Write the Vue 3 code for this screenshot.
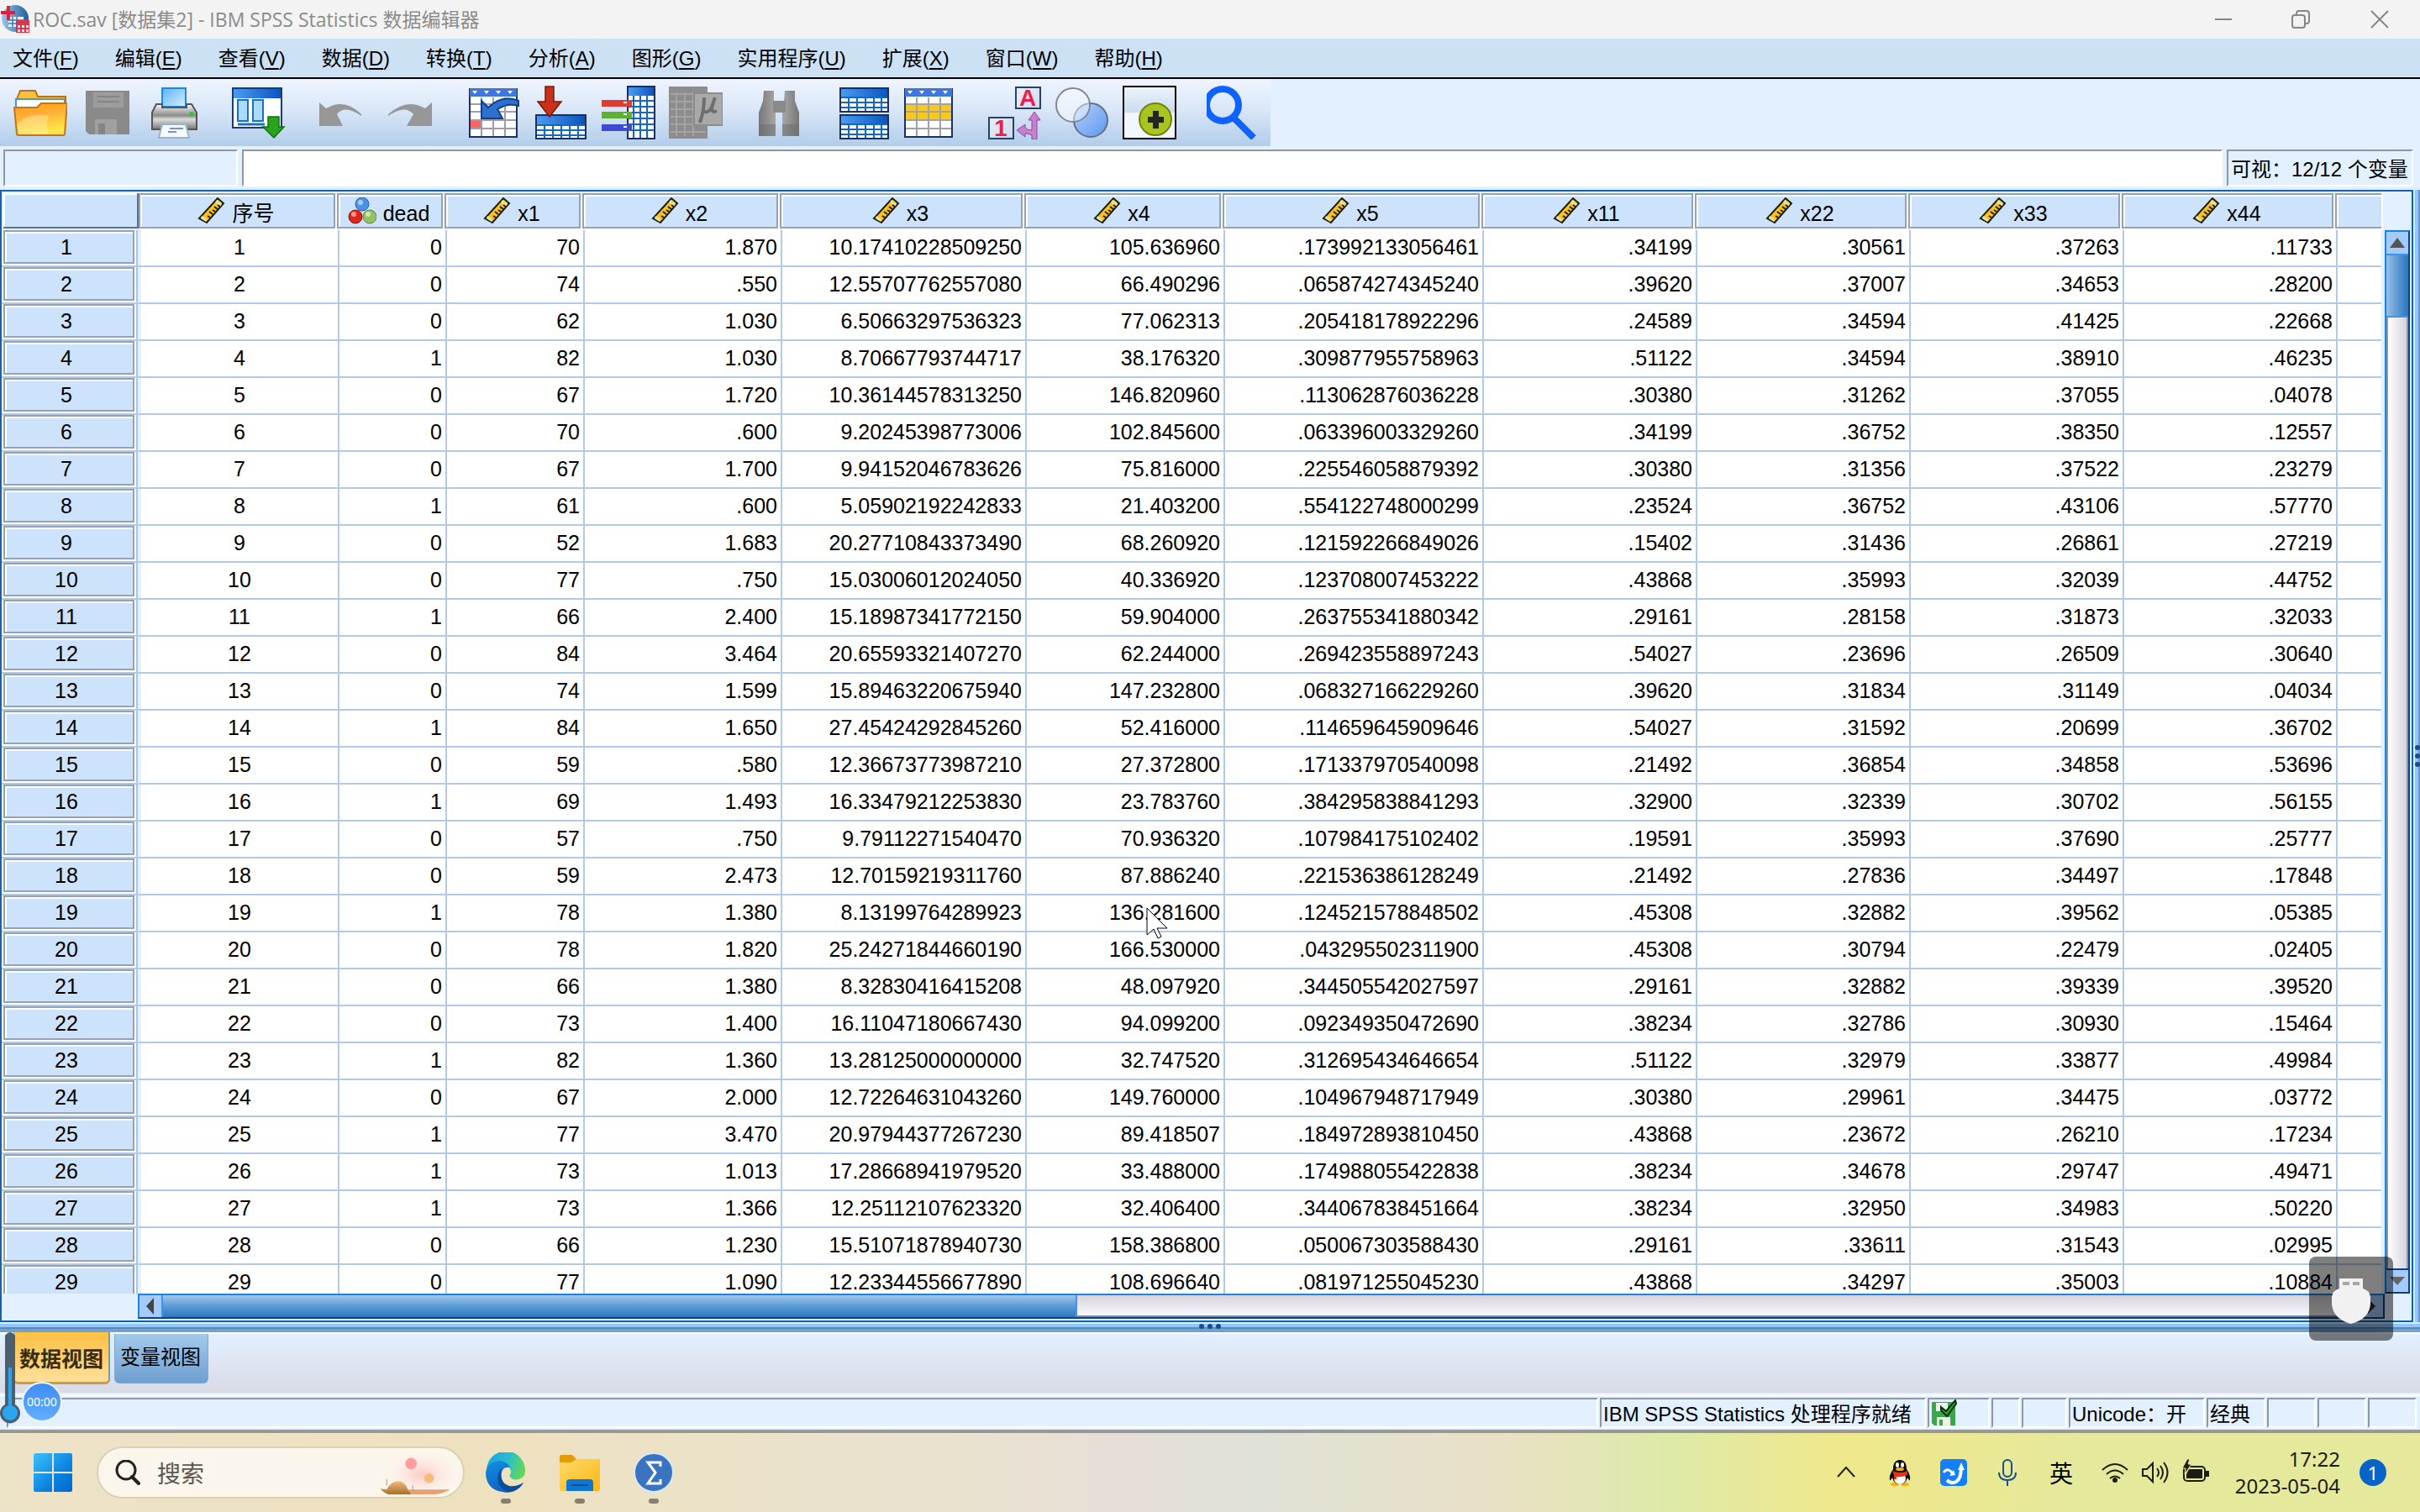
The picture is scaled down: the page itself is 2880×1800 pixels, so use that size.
<script setup>
const menus = [
  ['文件', 'F'], ['编辑', 'E'], ['查看', 'V'], ['数据', 'D'], ['转换', 'T'], ['分析', 'A'],
  ['图形', 'G'], ['实用程序', 'U'], ['扩展', 'X'], ['窗口', 'W'], ['帮助', 'H'],
]

const columns = [
  { name: '序号', width: 236 },
  { name: 'dead', width: 128, nominal: true },
  { name: 'x1', width: 164 },
  { name: 'x2', width: 235 },
  { name: 'x3', width: 291 },
  { name: 'x4', width: 236 },
  { name: 'x5', width: 308 },
  { name: 'x11', width: 254 },
  { name: 'x22', width: 254 },
  { name: 'x33', width: 254 },
  { name: 'x44', width: 254 },
]

const data = `
0 70 1.870 10.17410228509250 105.636960 .173992133056461 .34199 .30561 .37263 .11733
0 74 .550 12.55707762557080 66.490296 .065874274345240 .39620 .37007 .34653 .28200
0 62 1.030 6.50663297536323 77.062313 .205418178922296 .24589 .34594 .41425 .22668
1 82 1.030 8.70667793744717 38.176320 .309877955758963 .51122 .34594 .38910 .46235
0 67 1.720 10.36144578313250 146.820960 .113062876036228 .30380 .31262 .37055 .04078
0 70 .600 9.20245398773006 102.845600 .063396003329260 .34199 .36752 .38350 .12557
0 67 1.700 9.94152046783626 75.816000 .225546058879392 .30380 .31356 .37522 .23279
1 61 .600 5.05902192242833 21.403200 .554122748000299 .23524 .36752 .43106 .57770
0 52 1.683 20.27710843373490 68.260920 .121592266849026 .15402 .31436 .26861 .27219
0 77 .750 15.03006012024050 40.336920 .123708007453222 .43868 .35993 .32039 .44752
1 66 2.400 15.18987341772150 59.904000 .263755341880342 .29161 .28158 .31873 .32033
0 84 3.464 20.65593321407270 62.244000 .269423558897243 .54027 .23696 .26509 .30640
0 74 1.599 15.89463220675940 147.232800 .068327166229260 .39620 .31834 .31149 .04034
1 84 1.650 27.45424292845260 52.416000 .114659645909646 .54027 .31592 .20699 .36702
0 59 .580 12.36673773987210 27.372800 .171337970540098 .21492 .36854 .34858 .53696
1 69 1.493 16.33479212253830 23.783760 .384295838841293 .32900 .32339 .30702 .56155
0 57 .750 9.79112271540470 70.936320 .107984175102402 .19591 .35993 .37690 .25777
0 59 2.473 12.70159219311760 87.886240 .221536386128249 .21492 .27836 .34497 .17848
1 78 1.380 8.13199764289923 136.281600 .124521578848502 .45308 .32882 .39562 .05385
0 78 1.820 25.24271844660190 166.530000 .043295502311900 .45308 .30794 .22479 .02405
0 66 1.380 8.32830416415208 48.097920 .344505542027597 .29161 .32882 .39339 .39520
0 73 1.400 16.11047180667430 94.099200 .092349350472690 .38234 .32786 .30930 .15464
1 82 1.360 13.28125000000000 32.747520 .312695434646654 .51122 .32979 .33877 .49984
0 67 2.000 12.72264631043260 149.760000 .104967948717949 .30380 .29961 .34475 .03772
1 77 3.470 20.97944377267230 89.418507 .184972893810450 .43868 .23672 .26210 .17234
1 73 1.013 17.28668941979520 33.488000 .174988055422838 .38234 .34678 .29747 .49471
1 73 1.366 12.25112107623320 32.406400 .344067838451664 .38234 .32950 .34983 .50220
0 66 1.230 15.51071878940730 158.386800 .050067303588430 .29161 .33611 .31543 .02995
0 77 1.090 12.23344556677890 108.696640 .081971255045230 .43868 .34297 .35003 .10884
`
const rows = data.trim().split('\n').map((line, i) => [String(i + 1), ...line.split(' ')])
</script>

<template>
  <div class="window">
    <header class="titlebar">
      <svg class="app-logo" viewBox="0 0 34 34">
        <defs><linearGradient id="lg" x1="0" x2="1"><stop offset="0" stop-color="#9cc4ea" /><stop offset="1" stop-color="#1f5f9e" /></linearGradient></defs>
        <ellipse cx="17" cy="16" rx="16" ry="16" fill="url(#lg)" />
        <path d="M9 14h18v12H9z" fill="#e8f2fb" />
        <path d="M9 18h18M9 22h18M14 14v12M19 14v12" stroke="#3c7ab8" stroke-width="1.5" />
        <path d="M7 1h4v6h6v4h-6v7H7v-7H0V7h7z" fill="#e0203c" />
        <path d="M18 18h16v15H18z" fill="#d8364f" />
        <path d="M20 24h3v3h-3zM25 24h3v3h-3zM30 24h3v3h-3zM20 29h3v3h-3zM25 29h3v3h-3zM30 29h3v3h-3z" fill="#fbdde2" />
      </svg>
      <h1>ROC.sav [数据集2] - IBM SPSS Statistics 数据编辑器</h1>
      <div class="win-controls">
        <button aria-label="最小化"><svg viewBox="0 0 22 22"><path d="M1 11h20" /></svg></button>
        <button aria-label="还原"><svg viewBox="0 0 22 22"><path d="M6 6V4q0-3 3-3h9q3 0 3 3v9q0 3-3 3h-2" /><rect x="1" y="6" width="15" height="15" rx="3" /></svg></button>
        <button aria-label="关闭"><svg viewBox="0 0 22 22"><path d="M1 1l20 20M21 1L1 21" /></svg></button>
      </div>
    </header>

    <nav class="menubar">
      <button v-for="m in menus" :key="m[1]">{{ m[0] }}(<u>{{ m[1] }}</u>)</button>
    </nav>

    <div class="toolbar-row">
      <div class="toolbar">
        <div class="tools">
          <button aria-label="打开">
            <svg viewBox="0 0 64 64">
              <defs>
                <linearGradient id="fo" x1="0" y1="0" x2="0.3" y2="1"><stop offset="0" stop-color="#ff9a1c" /><stop offset="0.5" stop-color="#ffb43a" /><stop offset="1" stop-color="#ffe94a" /></linearGradient>
              </defs>
              <path d="M4 16L8 6h18l3 7h33v10H4z" fill="#f9c23c" stroke="#b87414" stroke-width="2" />
              <path d="M3 16h58v10H3z" fill="#fff" stroke="#4e94d8" stroke-width="2" />
              <path d="M1 26h27l5-5h31l-3 36q0 2-2 2H6q-2 0-2-2z" fill="url(#fo)" stroke="#c87410" stroke-width="2" />
              <path d="M4 46q14-14 38-10-4 12 0 21H6z" fill="#fff2b0" opacity=".45" />
            </svg>
          </button>
          <button aria-label="保存" disabled>
            <svg viewBox="0 0 64 64">
              <path d="M6 6h52v52H10l-4-4z" fill="#8a8a8a" />
              <path d="M15 8h36v18H15z" fill="#9c9c9c" /><path d="M20 13h26M20 19h26" stroke="#858585" stroke-width="2" />
              <path d="M17 40h26v18H17z" fill="#a0a0a0" /><path d="M21 45h8v13h-8z" fill="#868686" />
            </svg>
          </button>
          <button aria-label="打印">
            <svg viewBox="0 0 64 64">
              <defs>
                <linearGradient id="pp" x1="0" y1="0" x2="1" y2="1"><stop offset="0" stop-color="#5ab4f4" /><stop offset="1" stop-color="#d8f0ff" /></linearGradient>
                <linearGradient id="pb" x1="0" y1="0" x2="0" y2="1"><stop offset="0" stop-color="#fafafa" /><stop offset="0.45" stop-color="#8c8c8c" /><stop offset="0.6" stop-color="#ddd" /><stop offset="1" stop-color="#777" /></linearGradient>
              </defs>
              <path d="M17 3h28v22H17z" fill="url(#pp)" stroke="#2488d8" stroke-width="2" />
              <path d="M10 22h7v4h29v-4h6l6 10v20H5V32z" fill="url(#pb)" stroke="#555" stroke-width="2" />
              <circle cx="52" cy="34" r="3" fill="#3fc23f" />
              <path d="M17 46h28l4 16H13z" fill="#f4faff" stroke="#9ab4cc" stroke-width="2" /><path d="M26 51h16M24 55h10" stroke="#7d94b4" stroke-width="2" />
            </svg>
          </button>
        </div>
        <div class="tools">
          <button aria-label="调用对话框">
            <svg viewBox="0 0 64 64">
              <defs><linearGradient id="hd" x1="0" x2="1"><stop offset="0" stop-color="#4b9cf0" /><stop offset="1" stop-color="#0a55c0" /></linearGradient></defs>
              <path d="M1 3h58v47H1z" fill="#fff" stroke="#1d3a72" stroke-width="2" /><path d="M2 4h56v11H2z" fill="url(#hd)" />
              <path d="M7 17h12v25H7zM25 17h12v25H25z" fill="#a8dcfa" stroke="#1c6fc4" stroke-width="2" /><path d="M7 46h32" stroke="#1c6fc4" stroke-width="3" />
              <path d="M43 37h13v12h6L50 62 37 49h6z" fill="#27a41c" stroke="#126e10" stroke-width="1.5" />
            </svg>
          </button>
        </div>
        <div class="tools">
          <button aria-label="撤消" disabled>
            <svg viewBox="0 0 64 64"><path d="M4 20l8 7Q34 14 54 34v2Q34 22 25 34l7 14H4z" fill="#979797" /></svg>
          </button>
          <button aria-label="恢复" disabled>
            <svg viewBox="0 0 64 64"><path d="M58 20l-8 7Q28 14 6 34v2q20-14 30-2l-8 14h30z" fill="#979797" /></svg>
          </button>
        </div>
        <div class="tools">
          <button aria-label="转到个案">
            <svg viewBox="0 0 64 64">
              <path d="M3 4h56v57H3z" fill="#fff" stroke="#1d3060" stroke-width="2" /><path d="M3 3h56v10H3z" fill="#3f78dc" />
              <path d="M6 6h6l-3 4zM20 6h6l-3 4zM34 6h6l-3 4zM48 6h6l-3 4z" fill="#fff" />
              <path d="M4 22h54M4 31h54M4 41h54M4 51h54M17 14v46M31 14v46M45 14v46" stroke="#9b9fa8" stroke-width="2" />
              <path d="M4 42h12v8H4z" fill="#fb6464" />
              <path d="M17 18l8 8Q42 10 61 18v6Q48 20 36 28l6 11H17z" fill="#2c70d0" stroke="#143e88" stroke-width="2" />
            </svg>
          </button>
          <button aria-label="转到变量">
            <svg viewBox="0 0 64 64">
              <path d="M2 35h59v28H2z" fill="#fff" stroke="#1d2f62" stroke-width="2" /><path d="M3 36h57v10H3z" fill="url(#hd)" />
              <path d="M3 47h57M3 53h57M3 59h57M12 46v16M22 46v16M32 46v16M42 46v16M52 46v16" stroke="#1268c4" stroke-width="2" />
              <path d="M13 1h10v18h9L18 37 4 19h9z" fill="#c9301a" stroke="#741808" stroke-width="1.5" />
            </svg>
          </button>
          <button aria-label="变量">
            <svg viewBox="0 0 64 64">
              <path d="M31 1h32v62H31z" fill="#fff" stroke="#1d2f62" stroke-width="2" /><path d="M32 2h30v10H32z" fill="url(#hd)" />
              <path d="M32 18h30M32 25h30M32 32h30M32 39h30M32 46h30M32 53h30M38 12v50M46 12v50M54 12v50" stroke="#1268c4" stroke-width="2" />
              <path d="M0 17h36v8H0z" fill="#dc3c34" /><path d="M0 31h36v8H0z" fill="#5cb034" /><path d="M0 46h36v8H0z" fill="#3c4cd0" />
              <path d="M26 20h4M26 34h4M26 49h4" stroke="#fff" stroke-width="2" />
            </svg>
          </button>
          <button aria-label="运行描述统计" disabled>
            <svg viewBox="0 0 64 64">
              <path d="M0 1h46v62H0z" fill="#8d8d8d" />
              <path d="M2 10h42M2 19h42M2 28h42M2 37h42M2 46h42M2 55h42M9 8v52M19 8v52M29 8v52" stroke="#a4a4a4" stroke-width="2" />
              <path d="M30 9h34v38H30z" fill="#a9a9a9" stroke="#8c8c8c" stroke-width="2" />
              <path d="M42 14q0 16-5 30M41 30q5 4 10-4l4-12M51 26q0 7 6 4" fill="none" stroke="#6e6e6e" stroke-width="4" />
            </svg>
          </button>
        </div>
        <div class="tools">
          <button aria-label="查找" disabled>
            <svg viewBox="0 0 64 64">
              <defs><linearGradient id="bn" x1="0" x2="1"><stop offset="0" stop-color="#777" /><stop offset="0.5" stop-color="#b0b0b0" /><stop offset="1" stop-color="#777" /></linearGradient></defs>
              <path d="M13 6h12v12l2 14v28H7V32l5-14zM38 6h12v12l5 14v28H35V32l2-14z" fill="url(#bn)" /><path d="M24 18h15v14H24z" fill="#8a8a8a" />
              <path d="M7 46h20v14H7zM35 46h20v14H35z" fill="#6c6c6c" opacity=".5" />
            </svg>
          </button>
        </div>
        <div class="tools">
          <button aria-label="拆分文件">
            <svg viewBox="0 0 64 64">
              <g v-for="dy in [0, 32]" :key="dy" :transform="`translate(0 ${dy})`">
                <path d="M4 3h57v28H4z" fill="#fff" stroke="#1d2f62" stroke-width="2" /><path d="M5 4h55v9H5z" fill="url(#hd)" />
                <path d="M5 14h55M5 20h55M5 26h55M14 13v17M24 13v17M34 13v17M44 13v17M53 13v17" stroke="#1268c4" stroke-width="2" />
              </g>
            </svg>
          </button>
          <button aria-label="选择个案">
            <svg viewBox="0 0 64 64">
              <path d="M1 4h56v57H1z" fill="#fff" stroke="#1d3060" stroke-width="2" /><path d="M1 3h56v10H1z" fill="#3f78dc" />
              <path d="M4 6h6l-3 4zM18 6h6l-3 4zM32 6h6l-3 4zM46 6h6l-3 4z" fill="#fff" /><path d="M2 22h54v19H2z" fill="#f9c916" />
              <path d="M2 22h54M2 31h54M2 41h54M2 51h54M15 14v46M29 14v46M43 14v46" stroke="#a3a3a3" stroke-width="2" />
            </svg>
          </button>
        </div>
        <div class="tools">
          <button aria-label="值标签" class="labels">
            <svg viewBox="0 0 64 64">
              <defs><linearGradient id="tl" x1="0" y1="0" x2="1" y2="1"><stop offset="0" stop-color="#fff" /><stop offset="1" stop-color="#b9cbe4" /></linearGradient></defs>
              <path d="M33 2h29v25H33zM1 38h29v25H1z" fill="url(#tl)" stroke="#27406e" stroke-width="2" />
              <path d="M55 31l-7 10h4v12q-6 0-8-3v-4l-10 7 10 8v-4q5 0 8 2v5h6V41h4z" fill="#c77fd0" stroke="#8c4a9c" stroke-width="1" />
              <text x="47" y="24" class="glyph">A</text><text x="15" y="60" class="glyph">1</text>
            </svg>
          </button>
          <button aria-label="使用变量集">
            <svg viewBox="0 0 64 64">
              <defs><linearGradient id="ci" x1="0" y1="0" x2="1" y2="1"><stop offset="0" stop-color="#b8d2fb" /><stop offset="1" stop-color="#5c96ee" /></linearGradient></defs>
              <circle cx="42" cy="41" r="20" fill="url(#ci)" stroke="#60708c" stroke-width="2" />
              <circle cx="21" cy="23" r="20" fill="#fff" fill-opacity=".45" stroke="#808898" stroke-width="2" />
            </svg>
          </button>
          <button aria-label="定制工具栏">
            <svg viewBox="0 0 64 64">
              <defs><linearGradient id="wn" x1="0" y1="0" x2="0" y2="1"><stop offset="0" stop-color="#eef4fc" /><stop offset="0.5" stop-color="#c9dcf0" /><stop offset="0.51" stop-color="#f1f7ff" /><stop offset="1" stop-color="#f1f7ff" /></linearGradient></defs>
              <path d="M1 1h62v62H1z" fill="url(#wn)" stroke="#000" stroke-width="2" />
              <circle cx="39" cy="40" r="19" fill="#a9c41c" stroke="#6f8414" stroke-width="2" />
              <path d="M36 30h7v7h6v7h-6v7h-7v-7h-6v-7h6z" fill="#23261c" />
            </svg>
          </button>
        </div>
        <div class="tools">
          <button aria-label="搜索">
            <svg viewBox="0 0 64 64"><circle cx="19" cy="23" r="19" fill="none" stroke="#0f62fe" stroke-width="8" /><path d="M32 38l24 24" stroke="#0f62fe" stroke-width="8" /></svg>
          </button>
        </div>
      </div>
    </div>

    <div class="editline">
      <input class="cell-name" type="text" readonly aria-label="单元格">
      <input class="cell-value" type="text" aria-label="单元格值">
      <output class="visible">可视：12/12 个变量</output>
    </div>

    <main class="workspace">
      <section class="sheet">
        <div class="sheet-body">
          <div class="table-clip">
            <table>
              <colgroup>
                <col class="col-index">
                <col v-for="c in columns" :key="c.name" :style="{ width: c.width + 'px' }">
                <col>
              </colgroup>
              <thead>
                <tr>
                  <td class="corner"><div></div></td>
                  <th v-for="c in columns" :key="c.name" scope="col">
                    <div class="head-box">
                      <svg v-if="c.nominal" viewBox="0 0 34 32">
                        <circle cx="17" cy="8" r="8" fill="#4c92e4" stroke="#2a64b0" /><circle cx="9" cy="23" r="8" fill="#d8281c" stroke="#9c140c" /><circle cx="26" cy="23" r="8" fill="#94c068" stroke="#5c8c3c" />
                        <circle cx="15" cy="6" r="3" fill="#a8d0fa" /><circle cx="7" cy="20" r="3" fill="#f8948c" /><circle cx="24" cy="20" r="3" fill="#cce6b0" />
                      </svg>
                      <svg v-else viewBox="0 0 34 32">
                        <path d="M25 1l7 6-20 23-9-5z" fill="#fcc21c" stroke="#1c1c10" stroke-width="2" />
                        <path d="M24 3l6 5-2 3-6-5zM6 22l6 4-1 3-6-4z" fill="#e0e4a8" />
                        <path d="M28 11l-3-2M25 14l-4-3M22 17l-3-2M19 20l-4-3M16 24l-3-2" stroke="#1c1c10" stroke-width="2" />
                      </svg>
                      <span>{{ c.name }}</span>
                    </div>
                  </th>
                  <th class="spare"><div class="head-box"></div></th>
                </tr>
              </thead>
              <tbody>
                <tr v-for="r in rows" :key="r[0]">
                  <th scope="row"><div class="row-box">{{ r[0] }}</div></th>
                  <td v-for="(v, i) in r" :key="i" :class="{ centered: i === 0 }">{{ v }}</td>
                  <td class="spare"></td>
                </tr>
              </tbody>
            </table>
          </div>
          <div class="vscroll">
            <button aria-label="向上"><svg viewBox="0 0 20 20"><path d="M10 4l9 12H1z" fill="#555" /></svg></button>
            <div class="track"><div class="thumb"></div></div>
            <button aria-label="向下" class="down"><svg viewBox="0 0 20 20"><path d="M10 15l9-10H1z" fill="#666" /></svg></button>
          </div>
        </div>
        <div class="hscroll">
          <button aria-label="向左"><svg viewBox="0 0 20 20"><path d="M5 10l9-10v20z" fill="#444" /></svg></button>
          <div class="track"><div class="thumb"></div></div>
          <button aria-label="向右"><svg viewBox="0 0 20 20"><path d="M15 10L6 1v18z" fill="#333" /></svg></button>
        </div>
      </section>
      <div class="vsplit"><span></span><span></span><span></span></div>
    </main>

    <div class="hsplit"><span></span><span></span><span></span></div>

    <div class="tabs">
      <button class="tab active">数据视图</button>
      <button class="tab">变量视图</button>
    </div>

    <footer class="status">
      <span class="fill"></span>
      <span class="w-proc">IBM SPSS Statistics 处理程序就绪</span>
      <span class="w-save">
        <svg viewBox="0 0 32 32">
          <path d="M1 3h28v28H4l-3-3z" fill="#3ba64c" /><path d="M6 4h14v10H6z" fill="#e8f4e8" /><path d="M7 21h16v10H7z" fill="#eef0e4" /><path d="M10 24h4v7h-4z" fill="#3ba64c" />
          <path d="M12 9l6 5L29 1l1 4-11 15-7-7z" fill="#22b42c" stroke="#0c2c0c" stroke-width="2" />
        </svg>
      </span>
      <span class="w-a"></span>
      <span class="w-b"></span>
      <span class="w-uni">Unicode：开</span>
      <span class="w-classic">经典</span>
      <span class="w-c"></span>
      <span class="w-c"></span>
      <span class="w-c"></span>
    </footer>

    <div class="taskbar">
      <button class="start" aria-label="开始">
        <svg viewBox="0 0 46 46">
          <defs><linearGradient id="ws" x1="0" y1="0" x2="1" y2="1"><stop offset="0" stop-color="#3fc0fb" /><stop offset="0.6" stop-color="#0a84e0" /><stop offset="1" stop-color="#0067cf" /></linearGradient></defs>
          <path d="M2 0h20v22H0V2q0-2 2-2zM24 0h20q2 0 2 2v20H24zM0 24h22v22H2q-2 0-2-2zM24 24h22v20q0 2-2 2H24z" fill="url(#ws)" />
        </svg>
      </button>
      <label class="search">
        <svg class="lens" viewBox="0 0 30 30"><circle cx="13" cy="12" r="11" fill="none" stroke="#26221c" stroke-width="3" /><path d="M20 20l8 8" stroke="#26221c" stroke-width="4" stroke-linecap="round" /></svg>
        <input type="text" placeholder="搜索" aria-label="搜索">
        <svg class="art" viewBox="0 0 96 60">
          <defs>
            <radialGradient id="glow"><stop offset="0" stop-color="#ffc9c4" /><stop offset="1" stop-color="#fdf0ea" stop-opacity="0" /></radialGradient>
            <linearGradient id="nut" x1="0" y1="0" x2="0" y2="1"><stop offset="0" stop-color="#f0bc78" /><stop offset="1" stop-color="#a86c30" /></linearGradient>
          </defs>
          <ellipse cx="56" cy="32" rx="46" ry="30" fill="url(#glow)" />
          <circle cx="42" cy="19" r="7" fill="#ff9e9c" /><circle cx="64" cy="37" r="6" fill="#f8bc78" />
          <path d="M28 51h62q-8 5-18 6H32z" fill="#e8a078" />
          <path d="M4 50l8 1q6-12 18-10 6 3 8 10l4 6H14q-6-2-10-7z" fill="url(#nut)" /><path d="M12 38v8M44 46v6" stroke="#a89484" stroke-width="1" />
        </svg>
      </label>
      <div class="apps">
        <button aria-label="Edge">
          <svg viewBox="0 0 48 48">
            <defs>
              <linearGradient id="e1" x1="0" y1="0.2" x2="1" y2="0.5"><stop offset="0" stop-color="#1ba0e0" /><stop offset="0.5" stop-color="#26bcd4" /><stop offset="1" stop-color="#62d858" /></linearGradient>
              <linearGradient id="e2" x1="0" y1="0" x2="0.6" y2="1"><stop offset="0" stop-color="#1490e0" /><stop offset="1" stop-color="#0b5cc0" /></linearGradient>
            </defs>
            <path d="M1 22A23 23 0 0 1 47 21c1 10-10 14-16 10-5-3 0-5-1-9-2-9-20-14-29 0z" fill="url(#e1)" />
            <path d="M0 25C1 8 24 6 29 18c-9-2-12 7-10 14 3 9 14 12 26 4C38 48 25 49 20 47 8 46 0 37 0 25z" fill="url(#e2)" />
            <path d="M19 19c-8 8-6 25 10 28 8-1 13-6 16-11-12 8-24 4-26-5-1-4-1-8 0-12z" fill="#0f4c9c" />
          </svg>
        </button>
        <button aria-label="文件资源管理器">
          <svg viewBox="0 0 48 48">
            <defs><linearGradient id="fx" x1="0" y1="0" x2="1" y2="1"><stop offset="0" stop-color="#ffd868" /><stop offset="1" stop-color="#fbb814" /></linearGradient></defs>
            <path d="M0 5q0-2 2-2h13l5 5h26q2 0 2 2v10H0z" fill="#e39c08" /><path d="M0 12h14l6-4h26q2 0 2 2v33q0 3-3 3H3q-3 0-3-3z" fill="url(#fx)" />
            <path d="M8 46V36q0-4 4-4h24q4 0 4 4v10z" fill="#0f76d4" /><path d="M14 39h20" stroke="#0a4c96" stroke-width="2" />
          </svg>
        </button>
        <button aria-label="SPSS">
          <svg viewBox="0 0 48 48">
            <circle cx="24" cy="24" r="23" fill="#3a74c0" stroke="#d8e8f8" stroke-width="2" />
            <path d="M32 17v-5H17l9 12-9 13h15v-5" fill="none" stroke="#fff" stroke-width="3" />
          </svg>
        </button>
      </div>
      <div class="tray">
        <button aria-label="显示隐藏的图标"><svg viewBox="0 0 32 32"><path d="M6 21l10-11 10 11" fill="none" stroke="#222" stroke-width="2" /></svg></button>
        <button aria-label="QQ">
          <svg viewBox="0 0 32 32">
            <ellipse cx="10" cy="30" rx="5" ry="2" fill="#f5b010" /><ellipse cx="22" cy="30" rx="5" ry="2" fill="#f5b010" />
            <path d="M16 1c6 0 8 5 8 11 2 3 5 8 4 13q-1 1-3-3-2 8-9 8t-9-8q-2 4-3 3c-1-5 2-10 4-13 0-6 2-11 8-11z" fill="#0c0c0c" />
            <ellipse cx="16" cy="23" rx="7" ry="7" fill="#fff" /><path d="M7 14q9 4 18 0v5q-8 3-13 2v3H9v-5z" fill="#e8301c" />
            <ellipse cx="13" cy="7" rx="2" ry="3" fill="#fff" /><ellipse cx="19" cy="7" rx="2" ry="3" fill="#fff" /><ellipse cx="16" cy="12" rx="5" ry="2" fill="#f5b010" />
          </svg>
        </button>
        <button aria-label="同步">
          <svg viewBox="0 0 32 32"><rect width="32" height="32" rx="5" fill="#1480f8" /><path d="M4 16q4-6 9-1l2 3" fill="none" stroke="#fff" stroke-width="3" /><path d="M8 25q5 5 11 2 6-4 6-17" fill="none" stroke="#fff" stroke-width="4" /><path d="M25 4l4 9h-8zM11 20l7-1-2-6z" fill="#fff" /></svg>
        </button>
        <button aria-label="麦克风">
          <svg viewBox="0 0 32 32"><rect x="11" y="1" width="10" height="20" rx="5" fill="none" stroke="#14508c" stroke-width="2" /><path d="M6 16q0 9 10 9t10-9M16 25v7" fill="none" stroke="#14508c" stroke-width="2" /></svg>
        </button>
        <button class="ime">英</button>
        <div class="sys">
          <button aria-label="网络">
            <svg viewBox="0 0 32 32"><path d="M1 13q15-14 30 0M6 18q10-9 20 0M10 23q6-5 12 0" fill="none" stroke="#1c1c14" stroke-width="2" /><circle cx="16" cy="25" r="3" fill="#1c1c14" /></svg>
          </button>
          <button aria-label="音量">
            <svg viewBox="0 0 32 32"><path d="M1 12h5l7-7v22l-7-7H1zM18 11q4 5 0 10M22 8q6 8 0 16M26 4q9 12 0 24" fill="none" stroke="#1c1c14" stroke-width="2" /></svg>
          </button>
          <button aria-label="电池">
            <svg viewBox="0 0 32 32"><rect x="2" y="9" width="25" height="17" rx="4" fill="none" stroke="#1c1c14" stroke-width="2" /><path d="M8 12h16v11H5v-5zM28 14h4v7h-4z" fill="#1c1c14" /><path d="M6 0L0 11h4l-1 7 8-12H7l2-6z" fill="#1c1c14" stroke="#e6e99b" stroke-width="1" /></svg>
          </button>
        </div>
        <div class="clock"><time>17:22</time><time>2023-05-04</time></div>
        <span class="badge">1</span>
      </div>
    </div>

    <svg class="cursor" viewBox="0 0 26 40"><path d="M1 1v32l8-7 5 11 4-2-5-10h12z" fill="#fff" stroke="#000" stroke-width="1" /></svg>
    <div class="usb">
      <svg viewBox="0 0 100 100"><path d="M36 26h28v12q8 2 9 10v8q-1 18-23 24-22-6-23-24v-8q1-8 9-10z" fill="#f1f1f1" /><path d="M40 30h8v4h-8zM52 30h8v4h-8z" fill="#a8a8a8" /></svg>
    </div>
    <svg class="gauge" viewBox="0 0 24 112">
      <path d="M6 6q6-8 12 0v82a12 12 0 1 1-12 0z" fill="#4a5f72" /><path d="M10 44h4v46h-4z" fill="#2ba6ea" /><circle cx="12" cy="98" r="9" fill="#2ba6ea" />
    </svg>
    <div class="timer">00:00</div>
  </div>
</template>

<style>
body { background: #e3f0ff; }
</style>

<style scoped>
* { box-sizing: border-box; }
.window {
  position: relative;
  display: flex;
  flex-direction: column;
  height: 100vh;
  overflow: hidden;
  background: #e3f0ff;
  color: #000;
  font: 24px/28px "Liberation Sans", "Noto Sans CJK SC", sans-serif;
}
button { padding: 0; border: 0; background: none; color: inherit; font: inherit; white-space: nowrap; }
input { min-width: 0; padding: 0; border: 0; border-radius: 0; background: none; font: inherit; }
svg { display: block; }

.titlebar { display: flex; align-items: center; height: 46px; padding-left: 1px; background: #f3f3f3; }
.app-logo { width: 34px; height: 34px; }
.titlebar h1 { margin: 0 auto 0 4px; color: #8b8b8b; font: 23px/32px "Open Sans", "Noto Sans CJK SC", sans-serif; }
.win-controls { display: flex; }
.win-controls button { display: grid; place-items: center; width: 92px; height: 46px; }
.win-controls button:last-child { width: 96px; }
.win-controls svg { width: 22px; height: 22px; fill: none; stroke: #868686; stroke-width: 2; }

.menubar { display: flex; gap: 43px; height: 48px; padding: 2px 0 0 15px; background: #cde1f5; border-bottom: 2px solid #000; }
.menubar u { text-decoration-thickness: 2px; text-underline-offset: 3px; }

.toolbar-row { display: flex; height: 80px; }
.toolbar { display: flex; gap: 36px; padding: 8px 12px 8px 16px; background: linear-gradient(#eff5ff, #dae7f8 45%, #b2cde9); }
.tools { display: flex; gap: 16px; }
.tools button, .tools svg { width: 64px; height: 64px; }
.glyph { fill: #ee1c4c; font: bold 28px "Liberation Sans", sans-serif; text-anchor: middle; }

.editline { display: flex; gap: 5px; height: 52px; padding: 4px 8px 4px 4px; }
.editline > * { height: 44px; border: 2px solid #fff; border-top-color: #8f989f; border-left-color: #8f989f; }
.cell-name { width: 279px; }
.cell-value { flex: 1; background: #fff; }
.visible { width: 222px; padding: 2px 0 0 3px; line-height: 40px; white-space: nowrap; }

.workspace { display: flex; flex: 1; min-height: 0; }
.sheet { display: flex; flex: 1; flex-direction: column; min-width: 0; border: 2px solid #1462b0; }
.sheet-body { display: flex; flex: 1; min-height: 0; }
.table-clip { flex: 1; min-width: 0; overflow: hidden; padding-right: 4px; }
table { width: 100%; table-layout: fixed; border-collapse: separate; border-spacing: 0; font-size: 25px; }
th, td { padding: 0; font-weight: normal; }
.col-index { width: 166px; }
thead th, .corner { height: 46px; padding: 2px 0; }
.corner div { height: 42px; margin: 0 3px 0 2px; background: #cde3fb; border-right: 2px solid #5f7287; border-bottom: 2px solid #5f7287; box-shadow: inset 2px 2px #fff; }
.head-box {
  display: flex; align-items: center; justify-content: center; gap: 8px;
  height: 42px; margin: 0 5px 0 -3px; padding-right: 3px;
  background: #cde3fb; border: 2px solid #93a2b6; box-shadow: inset 2px 2px #fff, 2px 2px #fff;
}
.head-box svg { width: 34px; height: 32px; }
.head-box span { padding-top: 6px; }
.spare .head-box { margin-right: 0; border-right: 0; }
tbody th { height: 44px; border-bottom: 2px solid #b2cae4; background: linear-gradient(90deg, #fff 160px, #a9c8e8 160px 162px, #e3f0ff 162px); }
.row-box { height: 40px; margin: 0 8px 2px 2px; padding-right: 6px; line-height: 36px; background: #cde3fb; border: 2px solid #93a2b6; box-shadow: inset 2px 2px #fff; }
tbody td { height: 44px; padding: 0 4px 2px 0; text-align: right; line-height: 38px; background: #fff; border-right: 2px solid #b2cae4; border-bottom: 2px solid #b2cae4; }
tbody td.centered { padding-right: 0; text-align: center; }
tbody td.spare { border-right: 0; }

.vscroll { display: flex; flex-direction: column; width: 30px; margin: 46px 2px 0 0; border: 2px solid #1e82e0; border-right-color: #0c4080; border-bottom-color: #0c4080; }
.vscroll button, .hscroll button { display: grid; place-items: center; flex: none; background: #a3cbfd; }
.vscroll button { height: 28px; border-bottom: 2px solid #3c94f0; }
.vscroll .down { border-top: 2px solid #0c4080; border-bottom: 0; }
.vscroll svg, .hscroll svg { width: 20px; height: 20px; }
.track { flex: 1; }
.vscroll .track { border: solid #8c96a6; border-width: 0 2px; background: linear-gradient(90deg, #fff, #d5d3de); }
.vscroll .thumb { height: 74px; margin: 0 -2px; border-bottom: 2px solid #3c94f0; background: linear-gradient(90deg, #96bfe8, #2a76bf); }
.hscroll { display: flex; height: 30px; margin: 0 32px 2px 162px; border: 2px solid #1e82e0; border-right-color: #0c4080; border-bottom-color: #0c4080; }
.hscroll button { width: 28px; border-right: 2px solid #3c94f0; }
.hscroll button:last-child { border: 0; }
.hscroll .track { background: linear-gradient(#d6d3dd, #f8f8fc); border-bottom: 2px solid #7d8894; }
.hscroll .thumb { width: calc(41% + 16px); height: 26px; border-right: 2px solid #3c94f0; background: linear-gradient(#a0c6ec, #5b9bd6 50%, #2e78c2); }

.vsplit { display: flex; flex-direction: column; align-items: center; justify-content: center; gap: 4px; width: 8px; border-left: 2px solid #ccf4ff; background: linear-gradient(90deg, #93c5ff 4px, #6b98cc 4px); }
.vsplit span, .hsplit span { width: 6px; height: 6px; border-radius: 3px; background: #1c4b8c; }
.hsplit { display: flex; justify-content: center; gap: 4px; height: 12px; border-top: 2px solid #ccf4ff; background: linear-gradient(#93c5ff 4px, #5e88b6 4px 6px, #6ea3d2 6px); }

.tabs { display: flex; gap: 5px; height: 72px; padding-left: 16px; border-top: 2px solid #fff; background: linear-gradient(#e3f0ff, #d9dae5); }
.tab { width: 112px; height: 59px; padding: 0 2px 2px 0; border-radius: 0 0 6px 6px; background: linear-gradient(#a4caec, #6f9fd0); border: 1px solid #7aa8d6; border-top: 0; }
.tab.active { width: 115px; height: 62px; margin-top: -2px; padding: 4px 0 0; background: linear-gradient(#ffc040, #ffe09a); border-right: 2px solid #6c9ccc; border-bottom: 3px solid #c89c40; font-size: 25px; font-weight: bold; color: #3a2c10; }

.status { display: flex; gap: 2px; height: 48px; padding: 6px 4px 4px 8px; border-bottom: 4px solid #95999a; background: linear-gradient(#e3f0ff 2px, #fff 2px 4px, #e3f0ff 4px); }
.status span { height: 36px; overflow: hidden; padding-left: 2px; line-height: 36px; white-space: nowrap; border: solid #fff; border-width: 2px; border-top-color: #8f989f; border-left-color: #8f989f; }
.status .fill { flex: 1; }
.status svg { width: 32px; height: 32px; }
.w-proc { width: 388px; }
.w-save { width: 74px; }
.w-a { width: 34px; }
.w-b { width: 54px; }
.w-uni { width: 162px; }
.w-classic { width: 70px; }
.w-c { width: 58px; }

.taskbar {
  display: flex; align-items: center; flex: none; height: 94px; padding: 0 40px;
  background: linear-gradient(90deg, #ede3c8 0, #eee1bf 20%, #e8e2d0 40%, #e6dfd6 46%, #e0e1d7 52%, #e9e1c6 62%, #deeaa8 69%, #f0e88c 76%, #ebe892 81%, #e5e99c 86%, #e6e99b 100%);
}
.start, .start svg { width: 46px; height: 46px; }
.search { display: flex; align-items: center; width: 438px; height: 62px; margin: 0 25px 0 29px; padding: 0 8px 0 20px; border: 2px solid #ddd1b4; border-radius: 31px; background: #fbf6ec; }
.lens { width: 30px; height: 30px; }
.search input { flex: 1; margin-left: 20px; color: #5d584e; font: 28px/40px "Noto Sans CJK SC", sans-serif; }
.search input::placeholder { color: #5d584e; opacity: 1; }
.art { width: 96px; height: 58px; }
.apps { display: flex; gap: 40px; }
.apps button { display: grid; position: relative; place-items: center; width: 48px; height: 94px; }
.apps svg { width: 48px; height: 48px; }
.apps button::after { content: ""; position: absolute; bottom: 10px; left: 18px; width: 12px; height: 6px; border-radius: 3px; background: #87806f; }
.tray { display: flex; align-items: center; gap: 32px; margin-left: auto; }
.tray button, .tray svg { width: 32px; height: 32px; }
.tray .ime { font: 28px/32px "Noto Sans CJK SC", sans-serif; }
.sys { display: flex; gap: 16px; }
.clock { display: flex; flex-direction: column; width: 156px; margin: 0 -9px 0 -32px; text-align: right; color: #1c1c14; font: 24px/32px "Noto Sans", sans-serif; }
.badge { width: 32px; height: 32px; border-radius: 16px; background: #0864c8; color: #fff; text-align: center; font: 22px/32px "Noto Sans", sans-serif; }

.cursor { position: absolute; left: 1364px; top: 1080px; width: 26px; height: 40px; }
.usb { position: absolute; right: 32px; bottom: 204px; width: 100px; height: 100px; border-radius: 8px; background: rgba(0, 0, 0, .5); }
.gauge { position: absolute; left: 0; bottom: 104px; width: 24px; height: 112px; }
.timer { position: absolute; left: 26px; bottom: 107px; width: 48px; height: 48px; border: 2px solid #eef6ff; border-radius: 24px; background: linear-gradient(#3d8cf6, #62b0fc); color: #fff; text-align: center; font: 14px/44px "Noto Sans", sans-serif; }
</style>
